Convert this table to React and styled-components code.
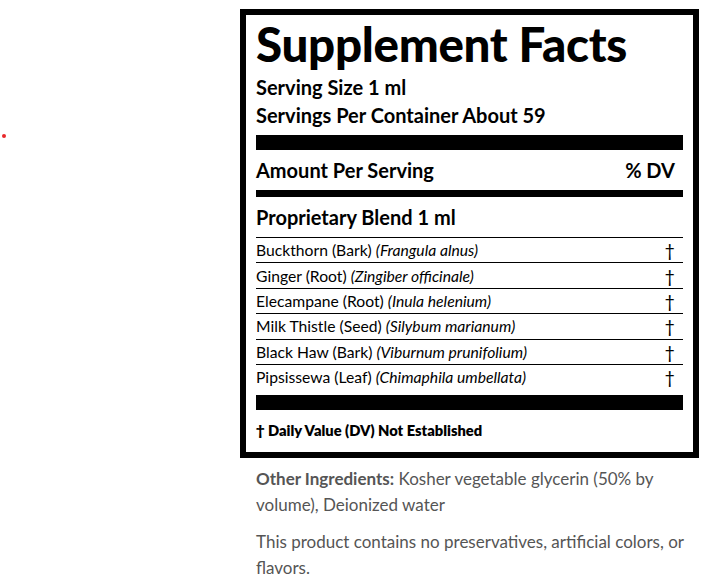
import React from "react";
import styled, { createGlobalStyle } from "styled-components";

const Global = createGlobalStyle`
  html, body { margin: 0; padding: 0; background: #fff; }
  body { font-family: Lato, "Open Sans", sans-serif; }
`;

const Page = styled.div`
  display: flex;
  padding-top: 9px;
`;

const Side = styled.div`
  width: 240px;
  flex: none;
  position: relative;
`;

const Dot = styled.span`
  position: absolute;
  left: 2px;
  top: 125px;
  width: 4px;
  height: 4px;
  border-radius: 50%;
  background: #e8282b;
`;

const Main = styled.div`
  width: 459px;
  flex: none;
`;

const Label = styled.div`
  border: 6px solid #000;
  padding: 0 10px 13px;
  color: #000;
  font-family: Lato, sans-serif;
`;

const Title = styled.h1`
  margin: 0;
  font-size: 47.5px;
  font-weight: 900;
  line-height: 58px;
  letter-spacing: -0.3px;
`;

const Meta = styled.div`
  font-size: 20px;
  font-weight: 700;
  line-height: 28px;
`;

const Bar = styled.div`
  height: ${(p) => p.$h}px;
  background: #000;
  margin: ${(p) => p.$m || "0"};
`;

const HeadRow = styled.div`
  display: flex;
  justify-content: space-between;
  align-items: center;
  font-size: 20px;
  font-weight: 700;
  height: 40px;
  padding-right: 8px;
`;

const Blend = styled.div`
  font-size: 20px;
  font-weight: 700;
  height: 40px;
  display: flex;
  align-items: center;
  border-bottom: 1px solid #000;
`;

const Row = styled.div`
  display: flex;
  justify-content: space-between;
  align-items: center;
  height: 24.4px;
  font-size: 15.7px;
  border-bottom: ${(p) => (p.$last ? "none" : "1px solid #000")};
  padding-right: 8px;
`;

const Latin = styled.i`
  font-style: italic;
`;

const Dagger = styled.span`
  font-size: 18px;
`;

const Foot = styled.div`
  font-size: 14.7px;
  font-weight: 800;
  margin-top: 11px;
`;

const Para = styled.p`
  margin: 8px 0 0;
  padding: 0 0 0 16px;
  color: #555;
  font-family: Lato, sans-serif;
  font-size: 17px;
  line-height: 26px;
  & + & { margin-top: 11px; }
  b { font-weight: 700; }
`;

const rows = [
  ["Buckthorn (Bark)", "Frangula alnus"],
  ["Ginger (Root)", "Zingiber officinale"],
  ["Elecampane (Root)", "Inula helenium"],
  ["Milk Thistle (Seed)", "Silybum marianum"],
  ["Black Haw (Bark)", "Viburnum prunifolium"],
  ["Pipsissewa (Leaf)", "Chimaphila umbellata"],
];

export default function App() {
  return (
    <>
      <Global />
      <Page>
        <Side>
          <Dot />
        </Side>
        <Main>
          <Label>
            <Title>Supplement Facts</Title>
            <Meta>Serving Size 1 ml</Meta>
            <Meta>Servings Per Container About 59</Meta>
            <Bar $h={15} $m="6px 0 0" />
            <HeadRow>
              <span>Amount Per Serving</span>
              <span>% DV</span>
            </HeadRow>
            <Bar $h={7} />
            <Blend>Proprietary Blend 1 ml</Blend>
            {rows.map(([c, l], i) => (
              <Row key={c} $last={i === rows.length - 1}>
                <span>
                  {c} <Latin>({l})</Latin>
                </span>
                <Dagger>†</Dagger>
              </Row>
            ))}
            <Bar $h={15} $m="6px 0 0" />
            <Foot>† Daily Value (DV) Not Established</Foot>
          </Label>
          <Para>
            <b>Other Ingredients:</b> Kosher vegetable glycerin (50% by volume), Deionized water
          </Para>
          <Para>This product contains no preservatives, artificial colors, or flavors.</Para>
        </Main>
      </Page>
    </>
  );
}
